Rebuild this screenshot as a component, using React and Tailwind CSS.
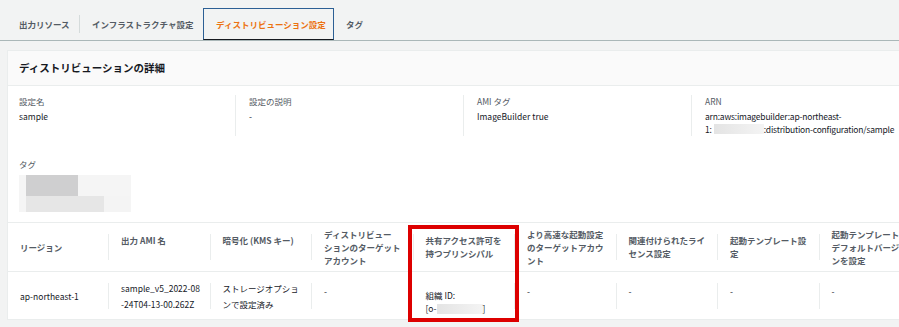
import React from 'react';

const tabs = [
  { label: '出力リソース', w: 'w-[72px]' },
  { label: 'インフラストラクチャ設定', w: 'w-[123px]' },
  { label: 'ディストリビューション設定', w: 'w-[131px]', active: true },
  { label: 'タグ', w: 'w-[60px]' },
];

const details = [
  { label: '設定名', value: ['sample'] },
  { label: '設定の説明', value: ['-'] },
  { label: 'AMI タグ', value: ['ImageBuilder true'] },
  { label: 'ARN', arn: true },
];

const headers = [
  ['リージョン'],
  ['出力 AMI 名'],
  ['暗号化 (KMS キー)'],
  ['ディストリビュー', 'ションのターゲット', 'アカウント'],
  ['共有アクセス許可を', '持つプリンシパル'],
  ['より高速な起動設定', 'のターゲットアカウ', 'ント'],
  ['関連付けられたライ', 'センス設定'],
  ['起動テンプレート設', '定'],
  ['起動テンプレートの', 'デフォルトバージョ', 'ンを設定'],
];

const row = [
  ['ap-northeast-1'],
  ['sample_v5_2022-08', '-24T04-13-00.262Z'],
  ['ストレージオプショ', 'ンで設定済み'],
  ['-'],
  null,
  ['-'],
  ['-'],
  ['-'],
  ['-'],
];

function Blur({ className }) {
  return <span className={`inline-block h-[10px] align-middle bg-gradient-to-r from-[#e4e4e4] via-[#ececec] to-[#f4f4f4] ${className}`} />;
}

function Cell({ idx, children, className = '' }) {
  return (
    <div className={`flex ${idx === 0 ? 'w-[100px] pl-[12px]' : 'w-[101.5px]'} shrink-0 ${className}`}>
      {idx > 0 && <div className="h-[26px] w-px shrink-0 self-center bg-[#eaeded]" />}
      <div className={`${idx > 0 ? 'pl-[12px]' : ''} whitespace-nowrap`}>{children}</div>
    </div>
  );
}

export default function App() {
  return (
    <div className="h-[327px] w-full overflow-hidden bg-[#f2f3f3] font-['Noto_Sans_CJK_JP','Noto_Sans',sans-serif] text-[8.5px] text-[#16191f]">
      {/* tabs */}
      <div className="flex h-[41px] items-end border-b border-[#aab7b8] pl-[7px]">
        {tabs.map((t, i) => (
          <React.Fragment key={t.label}>
            <div
              className={`flex h-[32px] ${t.w} items-center whitespace-nowrap pl-[12px] font-bold ${
                t.active
                  ? 'border border-[#2c5f94] border-b-[#16191f] pl-[12px] text-[#ec7211]'
                  : 'text-[#545b64]'
              }`}
            >
              {t.label}
            </div>
            {i === 0 && <div className="mb-[7px] h-[18px] w-px self-end bg-[#d5dbdb]" />}
          </React.Fragment>
        ))}
      </div>

      {/* card */}
      <div className="relative ml-[7px] mt-[9px] w-[960px] border border-[#eaeded] bg-white">
        <div className="flex h-[35px] items-center border-b border-[#eaeded] bg-[#fafafa] pl-[11px] text-[10.5px] font-bold">
          ディストリビューションの詳細
        </div>

        <div className="px-[11px] pt-[9px]">
          <div className="grid grid-cols-[216px_228px_228px_228px] leading-[13px]">
            {details.map((d, i) => (
              <div key={d.label} className={i > 0 ? 'border-l border-[#eaeded] pl-[13px]' : ''}>
                <div className="text-[#545b64]">{d.label}</div>
                {d.arn ? (
                  <div className="mt-[1.5px] whitespace-nowrap tracking-[-0.2px]">
                    <div>arn:aws:imagebuilder:ap-northeast-</div>
                    <div className="flex items-center">
                      1:<Blur className="ml-[2px] w-[50px]" />:distribution-configuration/sample
                    </div>
                  </div>
                ) : (
                  <div className="mt-[1.5px]">{d.value[0]}</div>
                )}
              </div>
            ))}
          </div>

          <div className="mt-[22px] leading-[13px] text-[#545b64]">タグ</div>
          <div className="mt-[4.5px] flex w-[112px] bg-[#f5f5f5] pl-[7px]">
            <div>
              <div className="h-[21px] w-[52px] bg-[#cfcfd0]" />
              <div className="flex h-[16px]">
                <div className="w-[78px] bg-[#e6e6e6]" />
                <div className="w-[26px] bg-[#f4f4f4]" />
              </div>
            </div>
          </div>
        </div>

        {/* table */}
        <div className="mt-[10px] border-t border-[#eaeded]">
          <div className="flex h-[49px] items-center border-b border-[#eaeded] font-bold leading-[13px] text-[#545b64]">
            {headers.map((h, i) => (
              <Cell key={i} idx={i}>
                {h.map((l) => (
                  <div key={l}>{l}</div>
                ))}
              </Cell>
            ))}
          </div>
          <div className="flex h-[47px] items-center">
            {row.map((c, i) =>
              c ? (
                <Cell key={i} idx={i} className="leading-[16px]">
                  {c.map((l) => (
                    <div key={l}>{l}</div>
                  ))}
                </Cell>
              ) : (
                <div key={i} className="flex h-full w-[101.5px] shrink-0 pl-[13px] pt-[17px] leading-[13px]">
                  <div>
                    <div>組織 ID:</div>
                    <div className="flex items-center whitespace-nowrap">
                      [o-<Blur className="w-[46px]" />]
                    </div>
                  </div>
                </div>
              )
            )}
          </div>
        </div>

        {/* annotation */}
        <div className="absolute left-[400px] top-[174px] h-[97px] w-[111px] border-[4px] border-[#dd0000]" />
      </div>
    </div>
  );
}
